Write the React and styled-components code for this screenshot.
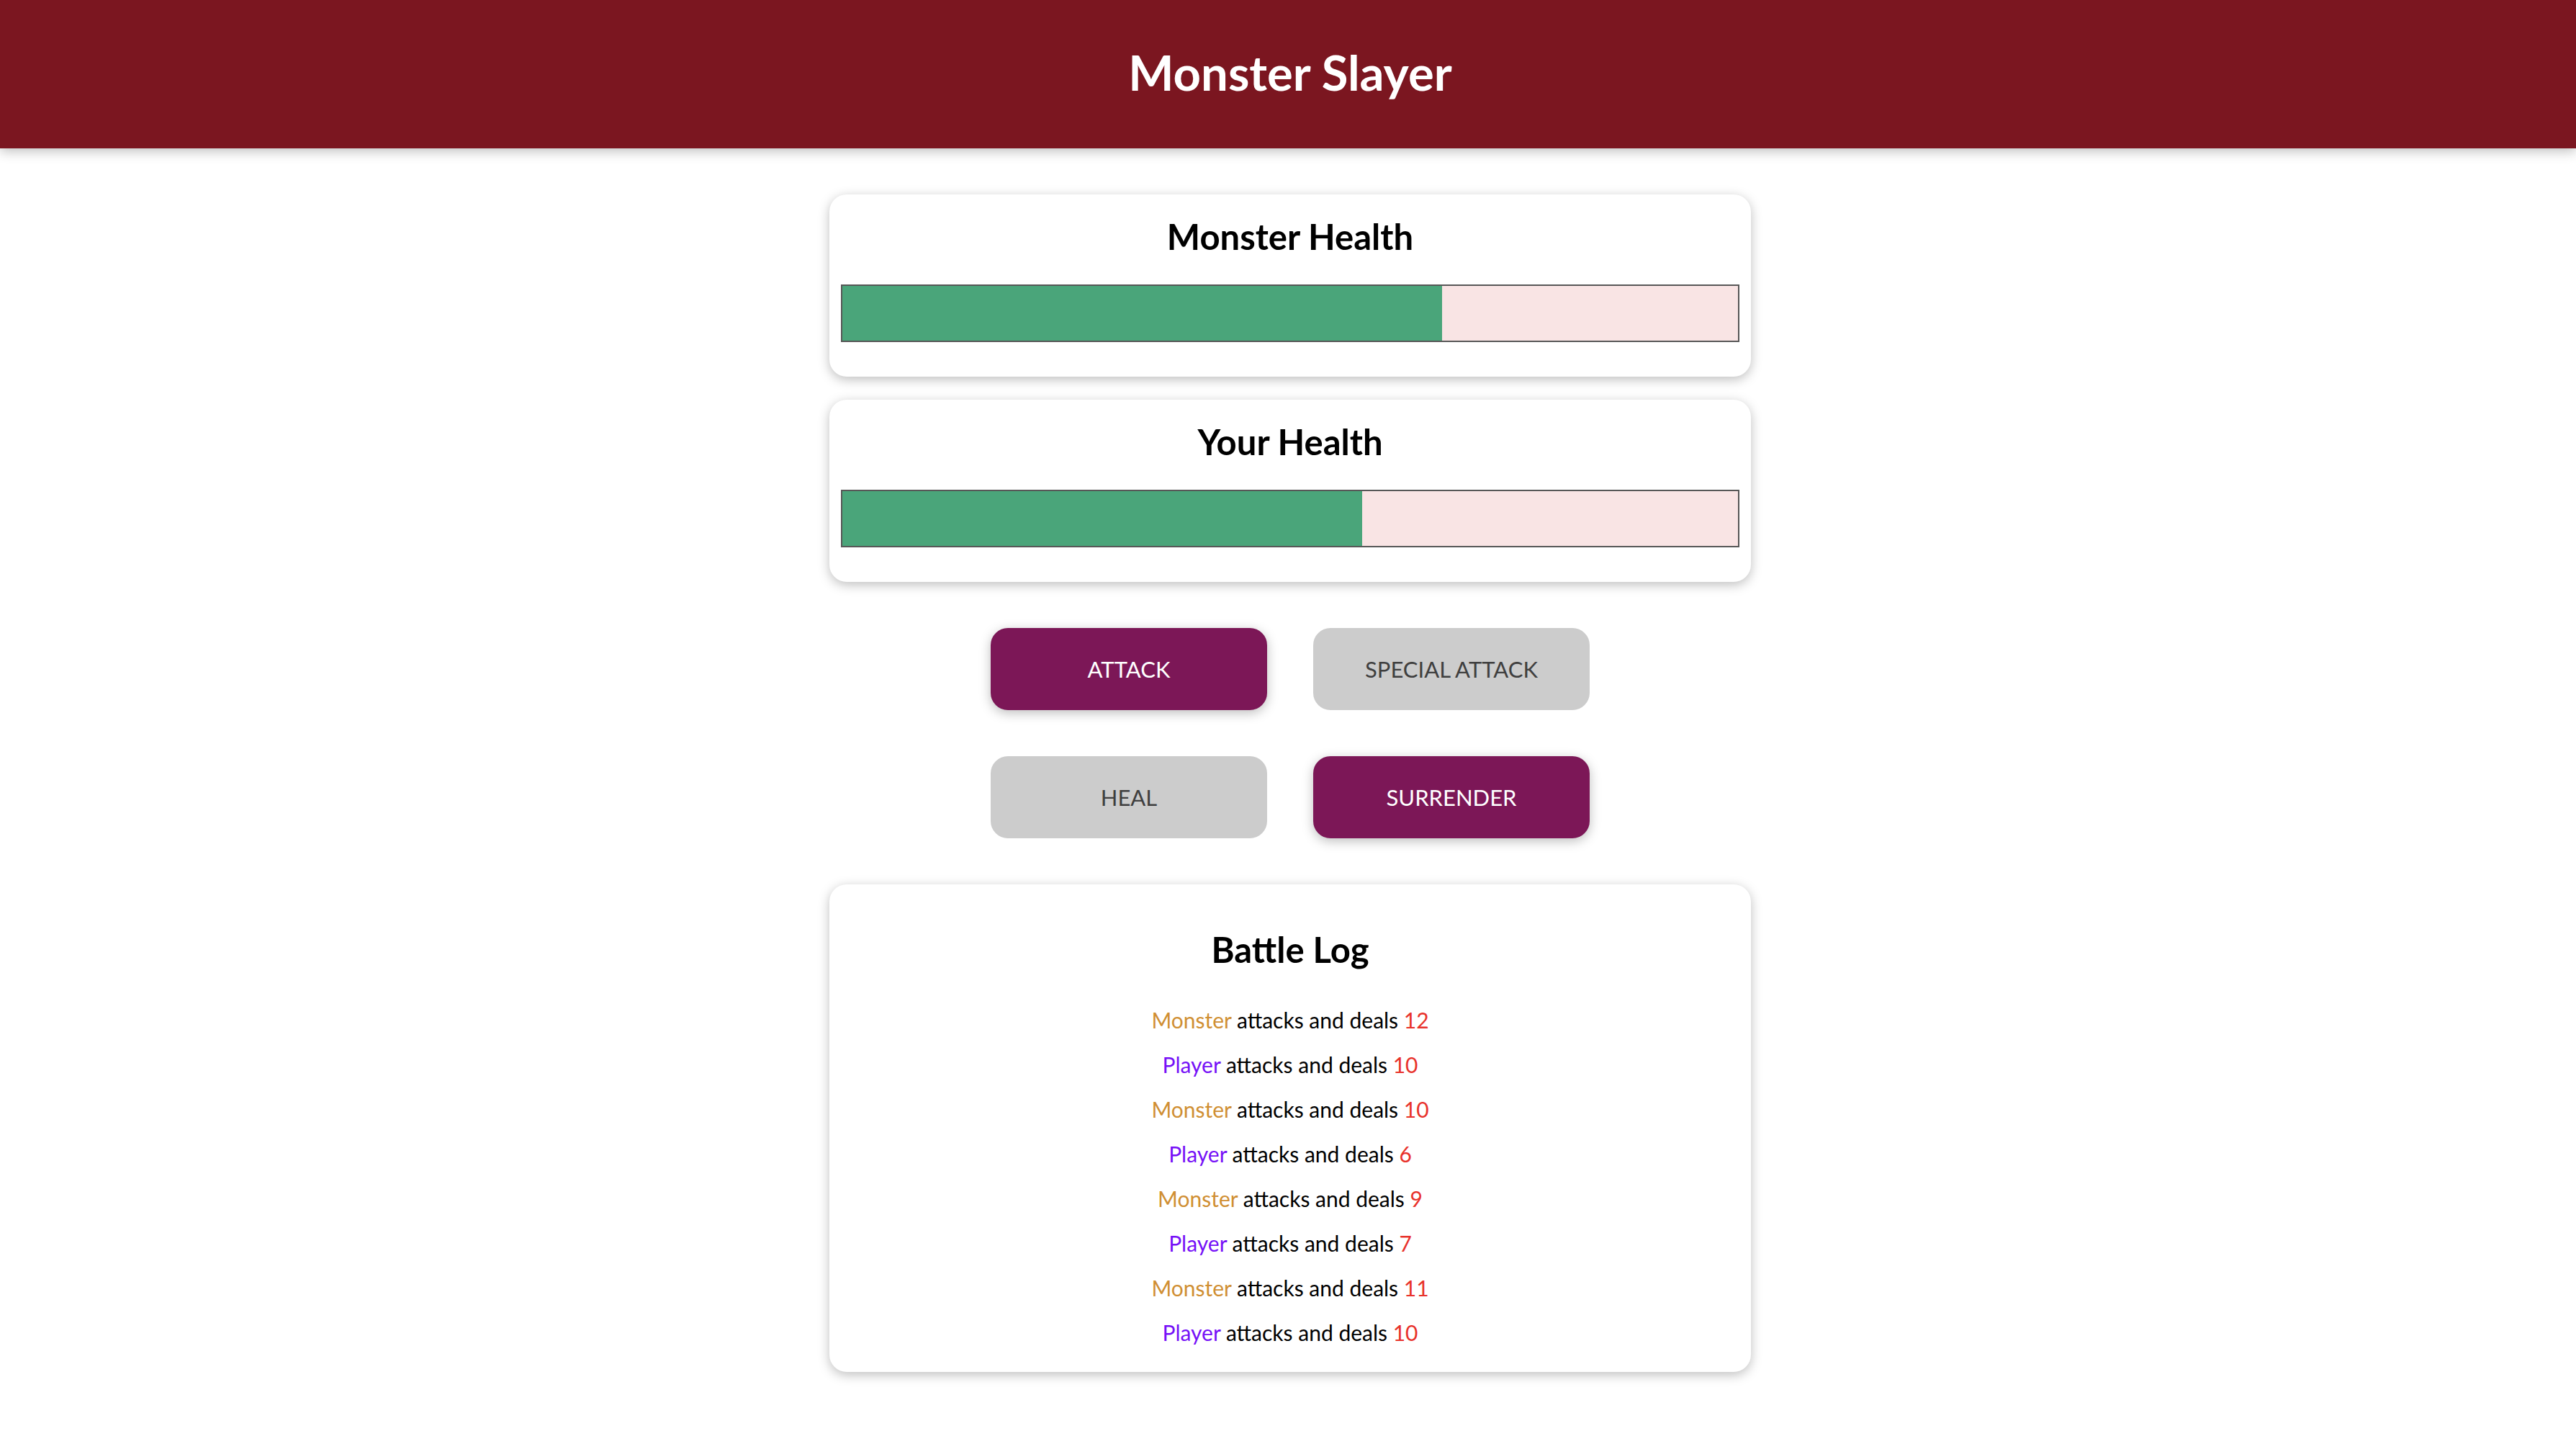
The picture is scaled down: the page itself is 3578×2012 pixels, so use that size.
import React from "react";
import styled, { createGlobalStyle } from "styled-components";

const GlobalStyle = createGlobalStyle`
  * { box-sizing: border-box; }
  html { font-family: Lato, "Open Sans", sans-serif; }
  body { margin: 0; padding-left: 6px; background: #ffffff; }
`;

const Header = styled.header`
  box-shadow: 0 4px 16px rgba(0, 0, 0, 0.26);
  padding: 16px;
  margin-left: -6px;
  padding-left: 22px;
  background-color: #7b1620;
  color: #ffffff;
  text-align: center;
  margin-bottom: 64px;
  height: 206px;
`;

const Title = styled.h1`
  margin: 37px 0 0;
  font-size: 67px;
  line-height: 94px;
  font-weight: 700;
`;

const Section = styled.section`
  width: 90%;
  max-width: 1280px;
  margin: 0 auto;
`;

const Card = styled.div`
  text-align: center;
  padding: 16px;
  box-shadow: 0 4px 16px rgba(0, 0, 0, 0.26);
  border-radius: 24px;
  margin: 32px auto;
  background: #ffffff;
`;

const CardTitle = styled.h2`
  margin: ${(p) => (p.$log ? "40px 0" : "8px")};
  font-size: 49px;
  line-height: 69px;
  font-weight: 700;
  color: #000000;
`;

const HealthBar = styled.div`
  width: 100%;
  height: 80px;
  border: 2px solid #575757;
  margin: 32px 0;
  background: #f9e4e4;
`;

const HealthValue = styled.div`
  background-color: #4aa57a;
  height: 100%;
`;

const Controls = styled.section`
  width: 90%;
  max-width: 1280px;
  margin: 0 auto;
  display: flex;
  flex-wrap: wrap;
  justify-content: center;
  padding: 0 192px;
`;

const Button = styled.button`
  font-family: inherit;
  font-size: 31px;
  line-height: 46px;
  border: 2px solid ${(p) => (p.disabled ? "#cccccc" : "#7c1757")};
  background-color: ${(p) => (p.disabled ? "#cccccc" : "#7c1757")};
  color: ${(p) => (p.disabled ? "#3f3f3f" : "#ffffff")};
  padding: 32px 16px;
  border-radius: 24px;
  margin: 32px;
  width: 384px;
  cursor: ${(p) => (p.disabled ? "not-allowed" : "pointer")};
  box-shadow: ${(p) => (p.disabled ? "none" : "0 4px 16px rgba(0, 0, 0, 0.26)")};
`;

const LogList = styled.ul`
  list-style: none;
  margin: 0;
  padding: 0;
`;

const LogItem = styled.li`
  margin: 16px 0;
  font-size: 30px;
  line-height: 46px;
  color: #000000;
`;

const Actor = styled.span`
  color: ${(p) => (p.$who === "player" ? "#7611f7" : "#d08f33")};
`;

const Damage = styled.span`
  color: #e8322b;
`;

const log = [
  ["monster", 12],
  ["player", 10],
  ["monster", 10],
  ["player", 6],
  ["monster", 9],
  ["player", 7],
  ["monster", 11],
  ["player", 10],
];

const buttons = [
  ["ATTACK", false],
  ["SPECIAL ATTACK", true],
  ["HEAL", true],
  ["SURRENDER", false],
];

export default function App() {
  const monsterHealth = 67;
  const playerHealth = 58;
  return (
    <>
      <GlobalStyle />
      <Header>
        <Title>Monster Slayer</Title>
      </Header>
      <Section>
        <Card>
          <CardTitle>Monster Health</CardTitle>
          <HealthBar>
            <HealthValue style={{ width: `${monsterHealth}%` }} />
          </HealthBar>
        </Card>
        <Card>
          <CardTitle>Your Health</CardTitle>
          <HealthBar>
            <HealthValue style={{ width: `${playerHealth}%` }} />
          </HealthBar>
        </Card>
      </Section>
      <Controls>
        {buttons.map(([label, disabled]) => (
          <Button key={label} disabled={disabled}>
            {label}
          </Button>
        ))}
      </Controls>
      <Section>
        <Card>
          <CardTitle $log>Battle Log</CardTitle>
          <LogList>
            {log.map(([who, dmg], i) => (
              <LogItem key={i}>
                <Actor $who={who}>{who === "player" ? "Player" : "Monster"}</Actor>
                {" attacks and deals "}
                <Damage>{dmg}</Damage>
              </LogItem>
            ))}
          </LogList>
        </Card>
      </Section>
    </>
  );
}
